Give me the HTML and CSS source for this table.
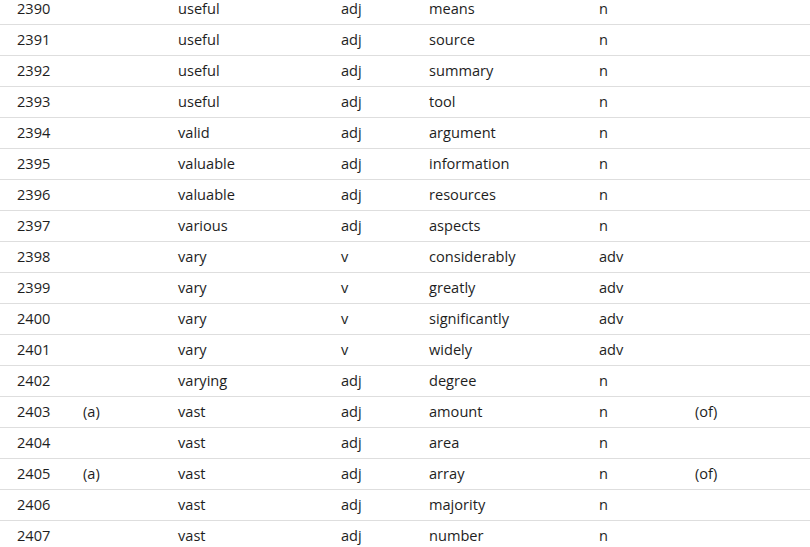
FILE: index.html
```html
<!DOCTYPE html>
<html>
<head>
<meta charset="utf-8">
<link rel="stylesheet" href="styles.css">
</head>
<body>
<div class="table">
  <div class="row"><span>2390</span><span></span><span>useful</span><span>adj</span><span>means</span><span>n</span><span></span></div>
  <div class="row"><span>2391</span><span></span><span>useful</span><span>adj</span><span>source</span><span>n</span><span></span></div>
  <div class="row"><span>2392</span><span></span><span>useful</span><span>adj</span><span>summary</span><span>n</span><span></span></div>
  <div class="row"><span>2393</span><span></span><span>useful</span><span>adj</span><span>tool</span><span>n</span><span></span></div>
  <div class="row"><span>2394</span><span></span><span>valid</span><span>adj</span><span>argument</span><span>n</span><span></span></div>
  <div class="row"><span>2395</span><span></span><span>valuable</span><span>adj</span><span>information</span><span>n</span><span></span></div>
  <div class="row"><span>2396</span><span></span><span>valuable</span><span>adj</span><span>resources</span><span>n</span><span></span></div>
  <div class="row"><span>2397</span><span></span><span>various</span><span>adj</span><span>aspects</span><span>n</span><span></span></div>
  <div class="row"><span>2398</span><span></span><span>vary</span><span>v</span><span>considerably</span><span>adv</span><span></span></div>
  <div class="row"><span>2399</span><span></span><span>vary</span><span>v</span><span>greatly</span><span>adv</span><span></span></div>
  <div class="row"><span>2400</span><span></span><span>vary</span><span>v</span><span>significantly</span><span>adv</span><span></span></div>
  <div class="row"><span>2401</span><span></span><span>vary</span><span>v</span><span>widely</span><span>adv</span><span></span></div>
  <div class="row"><span>2402</span><span></span><span>varying</span><span>adj</span><span>degree</span><span>n</span><span></span></div>
  <div class="row"><span>2403</span><span>(a)</span><span>vast</span><span>adj</span><span>amount</span><span>n</span><span>(of)</span></div>
  <div class="row"><span>2404</span><span></span><span>vast</span><span>adj</span><span>area</span><span>n</span><span></span></div>
  <div class="row"><span>2405</span><span>(a)</span><span>vast</span><span>adj</span><span>array</span><span>n</span><span>(of)</span></div>
  <div class="row"><span>2406</span><span></span><span>vast</span><span>adj</span><span>majority</span><span>n</span><span></span></div>
  <div class="row"><span>2407</span><span></span><span>vast</span><span>adj</span><span>number</span><span>n</span><span></span></div>
</div>
</body>
</html>
```

FILE: styles.css
```css
html, body {
  margin: 0;
  padding: 0;
  background: #fff;
}
body {
  font-family: "Open Sans", "Noto Sans", sans-serif;
  font-size: 14.6px;
  color: #1e1e1e;
  overflow: hidden;
}
.table {
  margin-top: -6px;
}
.row {
  display: grid;
  grid-template-columns: 66px 95px 163px 88px 170px 96px 1fr;
  height: 30px;
  align-items: center;
  border-bottom: 1px solid #dedede;
}
.row span {
  padding-left: 17px;
  padding-bottom: 2px;
  white-space: nowrap;
  line-height: 20px;
}
```
